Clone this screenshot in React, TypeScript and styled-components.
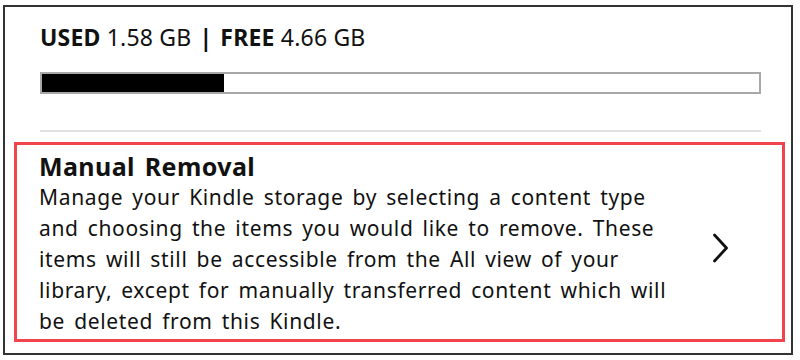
import styled, { createGlobalStyle } from "styled-components";

const GlobalStyle = createGlobalStyle`
  html, body {
    margin: 0;
    padding: 0;
    background: #ffffff;
  }
  body {
    font-family: "Noto Sans", "Open Sans", sans-serif;
    color: #111111;
  }
`;

const Frame = styled.div`
  margin: 5px 0 0 3px;
  width: 790px;
  height: 350px;
  box-sizing: border-box;
  border: 2px solid #333333;
  padding: 0 6px 11px 9px;
  display: flex;
  flex-direction: column;
`;

const Usage = styled.section`
  padding: 15px 24px 0 26px;
  display: flex;
  flex-direction: column;
`;

const UsageLine = styled.div`
  font-size: 23px;
  line-height: 31px;
  letter-spacing: 0.2px;
  color: #111111;
  white-space: nowrap;
`;

const Label = styled.b`
  font-weight: 700;
`;

const Divider = styled.span`
  font-weight: 700;
  margin: 0 8px;
`;

const Bar = styled.div`
  margin-top: 19px;
  height: 22px;
  box-sizing: border-box;
  border: 2px solid #a8a8a8;
  background: #ffffff;
  display: flex;
`;

const Fill = styled.div`
  background: #000000;
  height: 100%;
`;

const Rule = styled.hr`
  margin: 36px 0 0 0;
  border: none;
  border-top: 2px solid #e2e2e2;
`;

const RemovalCard = styled.div`
  margin-top: 10px;
  flex: 1;
  min-height: 0;
  box-sizing: border-box;
  border: 3px solid #f2444c;
  padding: 7px 0 0 22px;
  display: flex;
  align-items: center;
`;

const CardText = styled.div`
  flex: 1;
  align-self: flex-start;
`;

const Title = styled.h2`
  margin: 0;
  font-size: 25px;
  font-weight: 700;
  line-height: 28px;
  letter-spacing: 0.4px;
  word-spacing: 3px;
  color: #111111;
`;

const Body = styled.p`
  margin: 2px 0 0 0;
  font-size: 21px;
  line-height: 31px;
  letter-spacing: 0.65px;
  word-spacing: 3px;
  color: #111111;
  white-space: nowrap;
`;

const Chevron = styled.svg`
  width: 17px;
  height: 30px;
  margin: 5px 53px 0 0;
  flex-shrink: 0;
`;

const lines = [
  "Manage your Kindle storage by selecting a content type",
  "and choosing the items you would like to remove. These",
  "items will still be accessible from the All view of your",
  "library, except for manually transferred content which will",
  "be deleted from this Kindle.",
];

const App = () => {
  const used = 1.58;
  const free = 4.66;
  const pct = (used / (used + free)) * 100;
  return (
    <>
      <GlobalStyle />
      <Frame>
        <Usage>
          <UsageLine>
            <Label>USED</Label> 1.58 GB<Divider>|</Divider>
            <Label>FREE</Label> 4.66 GB
          </UsageLine>
          <Bar>
            <Fill style={{ width: `${pct}%` }} />
          </Bar>
          <Rule />
        </Usage>
        <RemovalCard>
          <CardText>
            <Title>Manual Removal</Title>
            <Body>
              {lines.map((line, i) => (
                <span key={i}>
                  {line}
                  {i < lines.length - 1 && <br />}
                </span>
              ))}
            </Body>
          </CardText>
          <Chevron viewBox="0 0 17 30">
            <path d="M2.5 2 L14.5 15 L2.5 28" fill="none" stroke="#111" strokeWidth="2.8" strokeLinecap="round" strokeLinejoin="round" />
          </Chevron>
        </RemovalCard>
      </Frame>
    </>
  );
};

export default App;
